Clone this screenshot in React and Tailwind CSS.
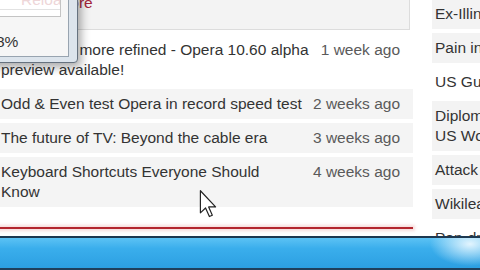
import React from "react";

const rows = [
  { lines: ["Faster and more refined - Opera 10.60 alpha", "preview available!"], date: "1 week ago", bg: "bg-white" },
  { lines: ["Odd & Even test Opera in record speed test"], date: "2 weeks ago", bg: "bg-[#f4f4f4]" },
  { lines: ["The future of TV: Beyond the cable era"], date: "3 weeks ago", bg: "bg-[#f4f4f4]" },
  { lines: ["Keyboard Shortcuts Everyone Should", "Know"], date: "4 weeks ago", bg: "bg-[#f4f4f4]" },
];

const side = [
  { lines: ["Ex-Illinois governor"], bg: "bg-[#f3f3f3]" },
  { lines: ["Pain in the neck"], bg: "bg-[#f3f3f3]" },
  { lines: ["US Gulf oil spill"], bg: "bg-white" },
  { lines: ["Diplomats say", "US World Cup"], bg: "bg-[#f3f3f3]" },
  { lines: ["Attack on ships"], bg: "bg-[#f3f3f3]" },
  { lines: ["Wikileaks video"], bg: "bg-[#f3f3f3]" },
  { lines: ["Pen-drive tricks"], bg: "bg-white" },
];

export default function App() {
  return (
    <div className="relative w-[480px] h-[270px] overflow-hidden bg-white font-['Liberation_Sans',Arial,sans-serif] text-[15.5px] leading-[20px] text-[#333]">
      <div className="flex h-[236px] gap-[19px]">
        <div className="w-[413px] shrink-0 flex flex-col">
          <div className="w-[410px] h-[30px] shrink-0 bg-[#f3f3f3] border-b border-r border-[#dcdcdc] overflow-hidden">
            <div className="-mt-[7px] pl-[16px] text-[#a3243a] whitespace-nowrap">Read more</div>
          </div>
          <div className="mt-[5px] flex flex-col gap-[4px]">
            {rows.map((r, i) => (
              <div key={i} className={`flex items-start justify-between py-[5px] pl-[1px] pr-[13px] ${r.bg}`}>
                <div className="whitespace-nowrap">
                  {r.lines.map((l, j) => (
                    <div key={j}>{l}</div>
                  ))}
                </div>
                <div className="whitespace-nowrap text-[#5a5a5a]">{r.date}</div>
              </div>
            ))}
          </div>
          <div className="mt-[20px] h-[2px] bg-[#b3262e] shadow-[0_0_3px_2px_rgba(230,140,140,0.3)]" />
        </div>
        <div className="flex-1 min-w-0 -mt-[1px] flex flex-col gap-[4px] overflow-hidden">
          {side.map((s, i) => (
            <div key={i} className={`py-[5px] pl-[3px] w-[160px] shrink-0 ${s.bg}`}>
              {s.lines.map((l, j) => (
                <div key={j} className="whitespace-nowrap">{l}</div>
              ))}
            </div>
          ))}
        </div>
      </div>

      {/* taskbar */}
      <div className="h-[34px] border-t-2 border-[#1d3850] border-b-2 border-b-[#1f3f5c] bg-[linear-gradient(180deg,#5cc2f4_0%,#3aaeec_35%,#2c9fe2_100%)]">
        <div className="h-full w-full bg-[radial-gradient(ellipse_40px_22px_at_470px_6px,rgba(235,248,255,0.95),rgba(235,248,255,0)_100%)]" />
      </div>

      {/* dialog */}
      <div className="absolute -left-[30px] -top-[10px] w-[108px] h-[73px] bg-[#dce4ec] border border-[#66727f] rounded-b-[4px] shadow-[3px_4px_10px_rgba(0,0,0,0.35)] pr-[8px] pb-[5px]">
        <div className="h-full bg-[#f6f6f6] border border-[#98a4b0] pl-[10px] pt-[2px]">
          <div className="h-[23px] w-[79px] bg-white border border-[#c4c4c4] overflow-hidden">
            <div className="-mt-[2px] pl-[38px] h-[17px] border-b border-[#e2e2e2] text-[#eed6d8] whitespace-nowrap leading-[14px]">Reload</div>
          </div>
          <div className="mt-[15px] ml-[14px] text-[#333] whitespace-nowrap">8%</div>
        </div>
      </div>

      {/* cursor */}
      <svg className="absolute left-[199px] top-[190px]" width="19" height="28" viewBox="0 0 12 19">
        <path d="M0.5 0.5 L0.5 15.5 L4 12.2 L6.6 18 L8.6 17.1 L6.1 11.5 L10.8 11.5 Z" fill="#fff" stroke="#222" strokeWidth="0.8" strokeLinejoin="round" />
      </svg>
    </div>
  );
}
